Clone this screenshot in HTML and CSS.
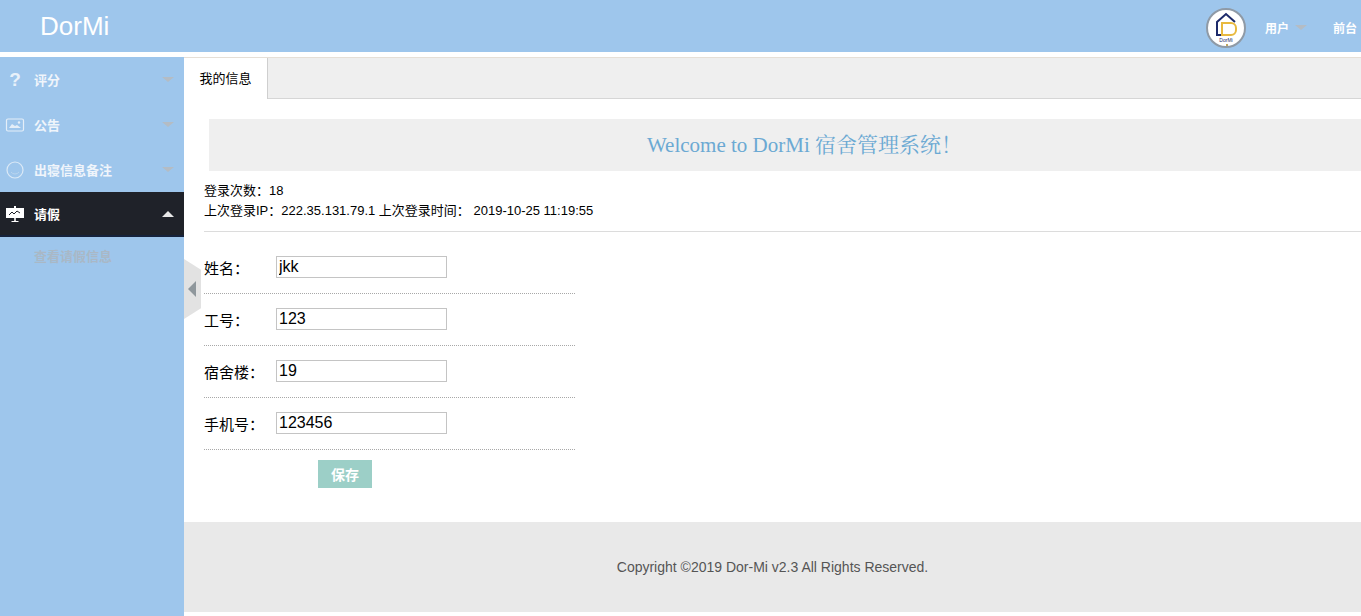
FILE: index.html
```html
<!DOCTYPE html>
<html lang="zh-CN">
<head>
<meta charset="utf-8">
<title>DorMi</title>
<link rel="stylesheet" href="styles.css">
</head>
<body>
<div class="page">
  <header class="topbar">
    <div class="brand">DorMi</div>
    <div class="top-right">
      <svg class="avatar" viewBox="0 0 40 40" width="40" height="40">
        <circle cx="20" cy="20" r="19" fill="#fff" stroke="#8f9aa6" stroke-width="2"/>
        <path d="M11 24V14L20 6l9 8" fill="none" stroke="#1d2a6b" stroke-width="2"/>
        <path d="M11 24v3h5" fill="none" stroke="#1d2a6b" stroke-width="2"/>
        <path d="M16 15h9a5 5 0 0 1 5 5v2a5 5 0 0 1-5 5h-9z" fill="none" stroke="#e8b93f" stroke-width="2"/>
        <text x="20" y="33.5" class="avatar-text">DorMi</text>
        <circle cx="21" cy="37" r="1" fill="#a8892f"/>
      </svg>
      <span class="top-link">用户<i class="caret down top-caret"></i></span>
      <span class="top-link front">前台</span>
    </div>
  </header>
  <div class="body-row">
    <aside class="sidebar">
      <div class="nav-item">
        <span class="nav-icon qmark">?</span><span class="nav-label">评分</span><i class="caret down"></i>
      </div>
      <div class="nav-item">
        <svg class="nav-icon" viewBox="0 0 20 16" width="20" height="16"><rect x="1.5" y="2" width="17" height="12" rx="1.5" fill="none" stroke="#e4eef8" stroke-width="1.2"/><path d="M4 11l3-4 3 2 2-1 4 3z" fill="#e4eef8"/><circle cx="14" cy="5.5" r="1.2" fill="#e4eef8"/></svg>
        <span class="nav-label">公告</span><i class="caret down"></i>
      </div>
      <div class="nav-item">
        <svg class="nav-icon" viewBox="0 0 20 20" width="20" height="20"><circle cx="10" cy="10" r="8" fill="none" stroke="#dbe9f6" stroke-width="1.2"/><path d="M6 12a5 5 0 0 0 8 0" fill="none" stroke="#b9d5ef" stroke-width="1"/></svg>
        <span class="nav-label">出寝信息备注</span><i class="caret down"></i>
      </div>
      <div class="nav-item active">
        <svg class="nav-icon" viewBox="0 0 20 18" width="20" height="18"><rect x="1" y="3" width="18" height="10" fill="#fff"/><path d="M9 1h2v2H9zM9.2 13h1.6v3H9.2zM6.5 16h7v1h-7z" fill="#fff"/><path d="M4 10l3-3 2 2 3-3 3 2" fill="none" stroke="#1f2229" stroke-width="1"/></svg>
        <span class="nav-label">请假</span><i class="caret up"></i>
      </div>
      <div class="sub-item">查看请假信息</div>
      <div class="collapse"><i class="left-arrow"></i></div>
    </aside>
    <main class="main">
      <nav class="tabs"><div class="tab">我的信息</div></nav>
      <div class="content">
        <h1 class="welcome">Welcome to DorMi 宿舍管理系统！</h1>
        <div class="login-info">
          <div>登录次数：18</div>
          <div>上次登录IP：222.35.131.79.1 上次登录时间： 2019-10-25 11:19:55</div>
        </div>
        <form class="info-form">
          <div class="form-row"><label>姓名：</label><input type="text" value="jkk"></div>
          <div class="form-row"><label>工号：</label><input type="text" value="123"></div>
          <div class="form-row"><label>宿舍楼：</label><input type="text" value="19"></div>
          <div class="form-row"><label>手机号：</label><input type="text" value="123456"></div>
          <button type="button" class="save">保存</button>
        </form>
      </div>
      <footer class="footer">Copyright ©2019 Dor-Mi v2.3 All Rights Reserved.</footer>
    </main>
  </div>
</div>
</body>
</html>
```
FILE: styles.css
```css
* { box-sizing: border-box; }
html, body { margin: 0; height: 616px; overflow: hidden; background: #fff; }
body { font-family: "Liberation Sans", "Noto Sans CJK SC", sans-serif; color: #000; }
.page { width: 1400px; height: 616px; display: flex; flex-direction: column; }

.topbar { height: 52px; flex: none; background: #9ec6ec; display: flex; align-items: center; justify-content: space-between; }
.brand { margin-left: 40px; font-size: 26px; color: #fff; line-height: 52px; }
.top-right { display: flex; align-items: center; height: 52px; }
.avatar { display: block; margin-right: 19px; margin-top: 3px; }
.avatar-text { font-size: 5px; fill: #1d2a6b; text-anchor: middle; font-family: "Liberation Sans", sans-serif; }
.top-link { color: #fff; font-size: 12px; font-weight: 700; display: flex; align-items: center; width: 68px; margin-top: 3px; }
.top-link.front { width: 67px; }
.top-caret { margin-left: 6px; }

.caret { display: block; width: 0; height: 0; border-left: 6px solid transparent; border-right: 6px solid transparent; }
.caret.down { border-top: 5px solid #b4bcc4; }
.caret.up { border-bottom: 6px solid #e8e8e8; }

.body-row { flex: 1; min-height: 0; display: flex; margin-top: 5px; }
.sidebar { width: 184px; flex: none; background: #9ec6ec; position: relative; }
.nav-item { height: 45px; display: flex; align-items: center; padding: 0 10px 0 5px; color: #f0f5fb; font-size: 13px; font-weight: 700; }
.nav-icon { width: 20px; flex: none; display: block; }
.qmark { font-size: 19px; color: #e8f1fa; text-align: center; }
.nav-label { margin-left: 9px; flex: 1; }
.nav-item:first-child { height: 45px; }
.nav-item.active { background: #1f2229; color: #fff; border-bottom: 2px solid #16233c; }
.sub-item { height: 40px; line-height: 40px; padding-left: 34px; font-size: 13px; font-weight: 700; color: #a9b8c6; }
.collapse { position: absolute; left: 184px; top: 202px; width: 17px; height: 60px; background: #e2e2e2; clip-path: polygon(0 0, 100% 18%, 100% 82%, 0 100%); display: flex; align-items: center; padding-left: 4px; z-index: 2; }
.left-arrow { display: block; width: 0; height: 0; border-top: 8px solid transparent; border-bottom: 8px solid transparent; border-right: 8px solid #8f979c; }

.main { flex: 1; min-width: 0; display: flex; flex-direction: column; }
.tabs { height: 42px; flex: none; background: #efefef; border-top: 1px solid #e6dfd6; border-bottom: 1px solid #d6d6d6; }
.tab { width: 84px; height: 41px; background: #fff; border-right: 1px solid #cfcfcf; font-size: 13px; line-height: 41px; text-align: center; }
.content { height: 423px; flex: none; padding: 20px 0 0 20px; }
.welcome { margin: 0 0 0 5px; height: 52px; line-height: 52px; background: #efefef; text-align: center; font-family: "Liberation Serif", "Noto Serif CJK SC", "Noto Sans CJK SC", serif; font-size: 21px; font-weight: 400; color: #6ba9d3; }
.login-info { margin-top: 10px; height: 51px; border-bottom: 1px solid #dcdcdc; font-size: 13px; line-height: 20px; }
.info-form { width: 371px; padding-top: 10px; }
.form-row { height: 52px; display: flex; align-items: center; border-bottom: 1px dotted #a8a8a8; font-size: 15px; }
.form-row label { width: 72px; flex: none; }
.form-row input { width: 171px; height: 22px; border: 1px solid #c4c4c4; padding: 0 2px; font: 16px "Liberation Sans", sans-serif; color: #000; background: #fff; outline: none; margin-top: -1px; }
.save { display: block; margin: 10px 0 0 114px; width: 54px; height: 28px; border: none; padding: 0; background: #9ccfc7; color: #fff; font: 700 14px "Liberation Sans", "Noto Sans CJK SC", sans-serif; }
.footer { height: 90px; flex: none; background: #e9e9e9; text-align: center; line-height: 90px; font-size: 14px; color: #555; padding-right: 39px; }
```
